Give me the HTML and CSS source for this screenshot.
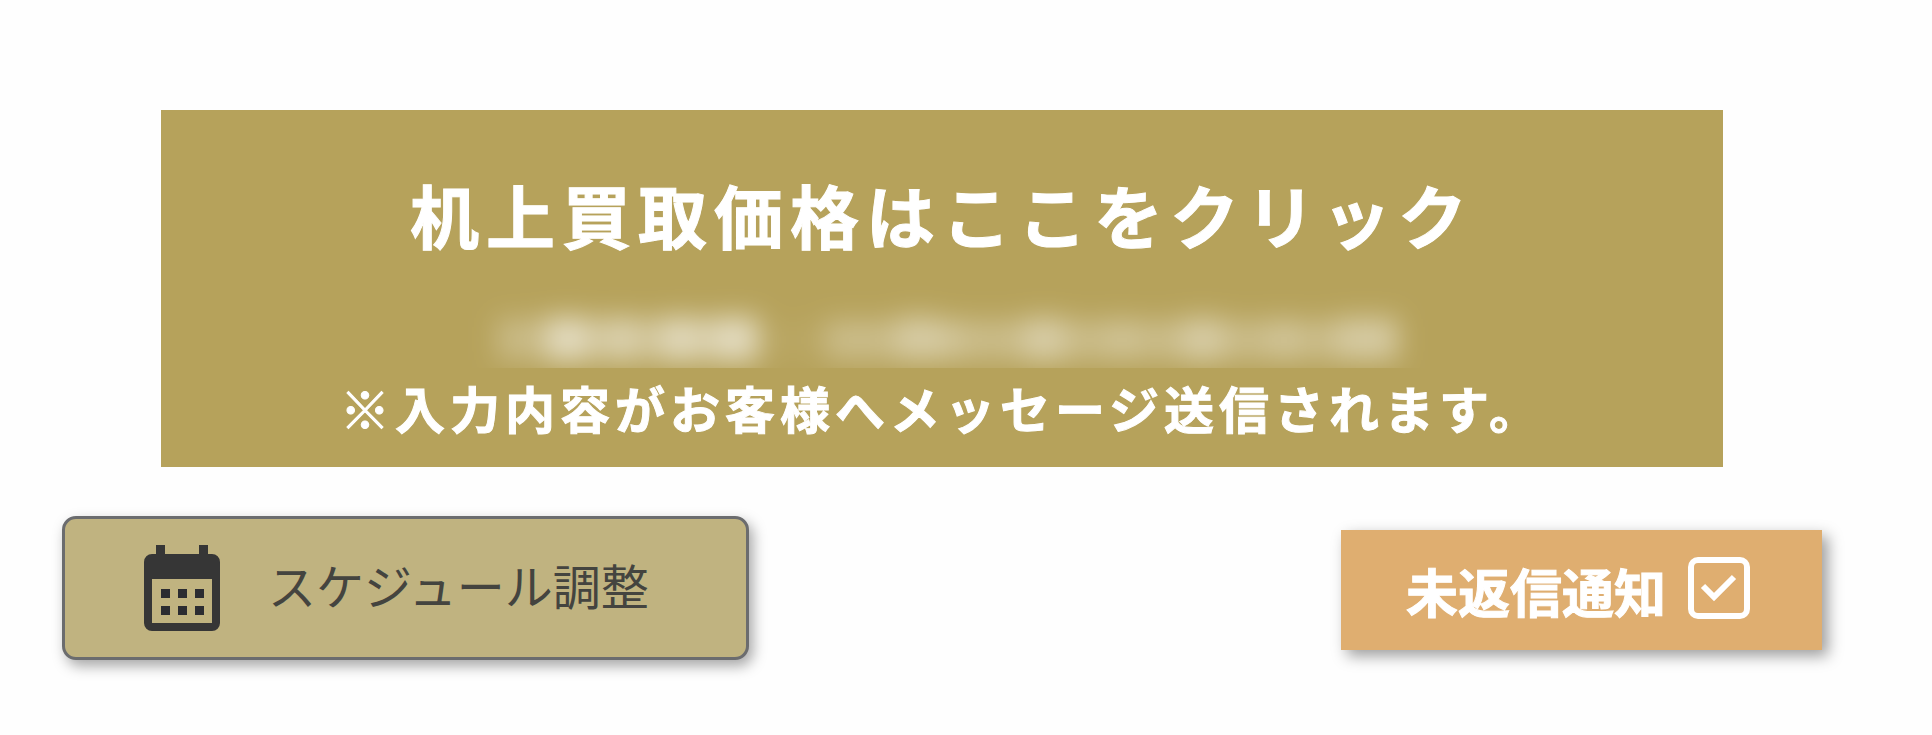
FILE: index.html
```html
<!DOCTYPE html>
<html lang="ja">
<head>
<meta charset="utf-8">
<meta name="viewport" content="width=device-width, initial-scale=1">
<title>机上買取価格</title>
<link rel="stylesheet" href="styles.css">
</head>
<body>
<main class="page">
  <button type="button" class="banner">
    <span class="banner-title">机上買取価格はここをクリック</span>
    <svg class="masked-line" viewBox="0 0 976 86" aria-hidden="true">
      <defs>
        <filter id="soft" x="-20%" y="-100%" width="140%" height="300%">
          <feGaussianBlur stdDeviation="13"/>
        </filter>
      </defs>
      <g filter="url(#soft)" fill="#fff" transform="translate(8 0)">
        <rect x="36" y="36" width="50" height="42" opacity=".26"/>
        <rect x="86" y="36" width="212" height="42" opacity=".36"/>
        <rect x="86" y="34" width="42" height="46" opacity=".38"/>
        <rect x="146" y="34" width="30" height="46" opacity=".24"/>
        <rect x="200" y="34" width="40" height="46" opacity=".34"/>
        <rect x="250" y="34" width="46" height="46" opacity=".38"/>
        <rect x="298" y="40" width="66" height="36" opacity=".05"/>
        <rect x="364" y="38" width="572" height="40" opacity=".28"/>
        <rect x="436" y="32" width="42" height="46" opacity=".24"/>
        <rect x="478" y="38" width="22" height="40" opacity=".14"/>
        <rect x="562" y="34" width="40" height="46" opacity=".26"/>
        <rect x="648" y="36" width="24" height="42" opacity=".12"/>
        <rect x="720" y="34" width="40" height="46" opacity=".24"/>
        <rect x="808" y="36" width="26" height="42" opacity=".14"/>
        <rect x="874" y="34" width="60" height="44" opacity=".22"/>
      </g>
    </svg>
    <span class="banner-note">※入力内容がお客様へメッセージ送信されます。</span>
  </button>
  <div class="actions">
    <button type="button" class="action schedule">
      <svg class="calendar-icon" viewBox="0 0 76 86" aria-hidden="true">
        <path fill="#363636" fill-rule="evenodd" d="M12 0h9v9h34V0h9v9h4a8 8 0 0 1 8 8v61a8 8 0 0 1-8 8H8a8 8 0 0 1-8-8V17a8 8 0 0 1 8-8h4zM8 34v44h60V34z"/>
        <path fill="#2b2c31" d="M17 44h9v9h-9zM34 44h9v9h-9zM51 44h9v9h-9zM17 61h9v9h-9zM34 61h9v9h-9zM51 61h9v9h-9z"/>
      </svg>
      <span class="schedule-label">スケジュール調整</span>
    </button>
    <button type="button" class="action notify">
      <span>未返信通知</span>
      <svg class="check-icon" viewBox="0 0 62 62" fill="none" stroke="#fff" aria-hidden="true">
        <rect x="3" y="3" width="56" height="56" rx="7" stroke-width="6"/>
        <path d="M15 29l11 11 20-20" stroke-width="6"/>
      </svg>
    </button>
  </div>
</main>
</body>
</html>
```
FILE: styles.css
```css
* {
  box-sizing: border-box;
}

body {
  margin: 0;
  background: #fefefe;
  font-family: "Noto Sans CJK JP", sans-serif;
}

.page {
  padding: 110px 110px 72px 62px;
}

button {
  border: 0;
  font-family: inherit;
  cursor: pointer;
}

.banner {
  display: flex;
  flex-direction: column;
  align-items: center;
  width: calc(100% - 198px);
  margin: 0 99px;
  padding: 58px 16px 24px;
  background: #b6a25b;
  color: #fff;
  font-weight: 700;
  white-space: nowrap;
  -webkit-text-stroke: 1px #fff;
}

.banner-title {
  font-size: 69px;
  line-height: 92px;
  letter-spacing: 7px;
}

.masked-line {
  width: 64%;
  margin-top: 22px;
  overflow: hidden;
}

.banner-note {
  margin-top: 3px;
  font-size: 50px;
  line-height: 72px;
  letter-spacing: 5px;
}

.actions {
  display: flex;
  justify-content: space-between;
  align-items: center;
  margin-top: 49px;
}

.action {
  display: flex;
  align-items: center;
  white-space: nowrap;
}

.schedule {
  gap: 48px;
  height: 144px;
  padding: 0 97px 0 79px;
  border: 3px solid #6b6c6e;
  border-radius: 14px;
  background: #c0b380;
  box-shadow: 4px 6px 14px rgba(0, 0, 0, .35);
  color: #44443f;
  font-size: 48px;
}

.schedule-label {
  padding-bottom: 8px;
}

.calendar-icon {
  width: 76px;
  height: 86px;
}

.notify {
  gap: 22px;
  height: 120px;
  margin-top: 4px;
  padding: 0 72px 0 65px;
  background: #dfae70;
  box-shadow: 6px 6px 14px rgba(0, 0, 0, .38);
  color: #fff;
  font-size: 52px;
  font-weight: 700;
  -webkit-text-stroke: 1px #fff;
}

.check-icon {
  width: 62px;
  height: 62px;
  margin-bottom: 4px;
}
```
